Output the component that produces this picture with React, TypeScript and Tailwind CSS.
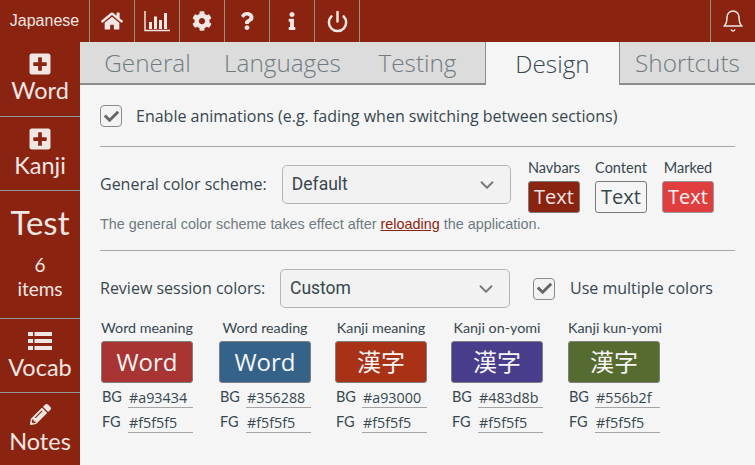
import { FaHome, FaCog, FaQuestion, FaInfo, FaPlusSquare, FaPencilAlt, FaCheck } from 'react-icons/fa'
import { LuChevronDown, LuBell, LuPower } from 'react-icons/lu'
import type { ReactNode } from 'react'

const open = "font-['Open_Sans',sans-serif]"
const round = "font-['Lato',sans-serif]"

function BarIcon() {
  return (
    <svg width="27" height="22" viewBox="0 0 27 22" fill="none">
      <path d="M1 1v19.5h25" stroke="#f0e6e3" strokeWidth="1.5" />
      <path d="M5 12h3v7H5zM10 6.5h3V19h-3zM15 10h3v9h-3zM20 3h3v16h-3z" fill="#f0e6e3" />
    </svg>
  )
}

function ListIcon() {
  return (
    <svg width="24" height="20" viewBox="0 0 24 20" fill="#f0e6e3">
      <path d="M0 1h5v4H0zM6.5 1H24v4H6.5zM0 8h5v4H0zM6.5 8H24v4H6.5zM0 15h5v4H0zM6.5 15H24v4H6.5z" />
    </svg>
  )
}

function TopCell({ children, className }: { children: ReactNode; className?: string }) {
  return <div className={`flex h-full items-center justify-center border-r border-[#9a8f8b] text-[#f0e6e3] ${className ?? 'w-[45px]'}`}>{children}</div>
}

function SideItem({ icon, label, h }: { icon: ReactNode; label: string; h: string }) {
  return (
    <div className={`flex flex-col items-center border-b border-[#8f9a98] pt-[8px] text-[#f0e6e3] ${h}`}>
      <div className="flex h-[27px] items-center text-[24px]">{icon}</div>
      <div className={`${round} -mt-[1px] text-[23.5px] leading-[28px]`}>{label}</div>
    </div>
  )
}

function Tab({ label, w, active }: { label: string; w: string; active?: boolean }) {
  if (active) {
    return (
      <div className={`flex items-center justify-center border-x border-[#8c8c8c] bg-[#f5f5f5] pt-[1px] text-[24.3px] font-light text-[#37474f] ${w}`}>
        {label}
      </div>
    )
  }
  return (
    <div className={`flex items-center justify-center border-b-2 border-[#8c8c8c] pt-[1px] text-[24.3px] font-light text-[#707b80] ${w}`}>
      {label}
    </div>
  )
}

function Checkbox() {
  return (
    <div className="flex h-[22px] w-[22px] items-center justify-center rounded-[4px] border border-[#8a8a8a] bg-[#f3f3f3] text-[15px] text-[#666]">
      <FaCheck />
    </div>
  )
}

function Select({ value, w }: { value: string; w: string }) {
  return (
    <div className={`flex h-[39px] items-center justify-between rounded-[5px] border border-[#b5b5b5] bg-[#f2f2f2] pl-[9px] pr-[12px] ${w}`}>
      <span className="font-['Roboto',sans-serif] text-[17.5px] text-[#37474f]">{value}</span>
      <LuChevronDown className="text-[22px] text-[#777]" />
    </div>
  )
}

function Swatch({ title, bg, fg, text, border }: { title: string; bg: string; fg: string; text: string; border: string }) {
  return (
    <div className="flex w-[52px] flex-col items-center">
      <div className={`${round} mb-[5px] whitespace-nowrap text-[14.5px] leading-[17px] text-[#37474f]`}>{title}</div>
      <div className={`flex h-[32px] w-[52px] items-center justify-center rounded-[3px] border ${border} ${open} text-[20px] ${bg} ${fg}`}>{text}</div>
    </div>
  )
}

const cols = [
  { title: 'Word meaning', text: 'Word', bg: 'bg-[#a93434]', hex: '#a93434', w: 'w-[118px]' },
  { title: 'Word reading', text: 'Word', bg: 'bg-[#356288]', hex: '#356288', w: 'w-[116px]' },
  { title: 'Kanji meaning', text: '漢字', bg: 'bg-[#a93116]', hex: '#a93000', w: 'w-[116px]' },
  { title: 'Kanji on-yomi', text: '漢字', bg: 'bg-[#483d8b]', hex: '#483d8b', w: 'w-[117px]' },
  { title: 'Kanji kun-yomi', text: '漢字', bg: 'bg-[#556b2f]', hex: '#556b2f', w: 'w-[100px]' },
]

function ColorRow({ name, hex }: { name: string; hex: string }) {
  return (
    <div className="flex h-[25px] items-center">
      <span className={`${round} -mt-[2px] w-[27px] pl-[1px] text-[14.5px] text-[#37474f]`}>{name}</span>
      <span className={`${open} h-[20px] w-[65px] border-b border-[#a5a5a5] pl-[1px] text-[14.3px] leading-[19px] text-[#37474f]`}>{hex}</span>
    </div>
  )
}

export default function App() {
  return (
    <div className={`flex h-[465px] w-[755px] flex-col overflow-hidden bg-[#f5f5f5] ${open}`}>
      <div className="flex h-[42px] shrink-0 bg-[#8a2310]">
        <TopCell className="w-[90px] font-['Liberation_Sans',sans-serif] text-[16px]">Japanese</TopCell>
        <TopCell><FaHome className="text-[22px]" /></TopCell>
        <TopCell><BarIcon /></TopCell>
        <TopCell><FaCog className="text-[20px]" /></TopCell>
        <TopCell><FaQuestion className="text-[18px]" /></TopCell>
        <TopCell><FaInfo className="text-[18px]" /></TopCell>
        <TopCell><LuPower className="text-[23px]" strokeWidth={2.6} /></TopCell>
        <div className="flex-1" />
        <div className="flex h-full w-[45px] items-center justify-center border-l border-[#9a8f8b] text-[24px] text-[#f0e6e3]"><LuBell strokeWidth={1.5} /></div>
      </div>
      <div className="flex flex-1">
        <div className="flex w-[80px] shrink-0 flex-col bg-[#8a2310]">
          <SideItem h="h-[75px]" icon={<FaPlusSquare />} label="Word" />
          <SideItem h="h-[74px]" icon={<FaPlusSquare />} label="Kanji" />
          <div className="flex h-[128px] flex-col items-center border-b border-[#8f9a98] pt-[10px] text-[#f0e6e3]">
            <div className={`${round} text-[33px] leading-[42px]`}>Test</div>
            <div className={`${round} mt-[9px] text-[19px] leading-[25px]`}>6</div>
            <div className={`${round} -mt-[1px] text-[19px] leading-[25px]`}>items</div>
          </div>
          <SideItem h="h-[74px]" icon={<ListIcon />} label="Vocab" />
          <SideItem h="h-[73px] border-b-0" icon={<FaPencilAlt className="text-[21px]" />} label="Notes" />
        </div>
        <div className="flex min-w-0 flex-1 flex-col">
          <div className="flex h-[43px] shrink-0 bg-[#dcdcdc]">
            <Tab label="General" w="w-[135px]" />
            <Tab label="Languages" w="w-[135px]" />
            <Tab label="Testing" w="w-[135px]" />
            <Tab label="Design" w="w-[135px]" active />
            <Tab label="Shortcuts" w="w-[135px]" />
          </div>
          <div className="pl-[20px] pr-[20px] pt-[20px]">
            <div className="flex items-center gap-[14px] pb-[19px]">
              <Checkbox />
              <span className="text-[16px] leading-[22px] text-[#37474f]">Enable animations (e.g. fading when switching between sections)</span>
            </div>
            <div className="border-t border-[#a8a8a8]" />
            <div className="mt-[12px] flex">
              <div className="flex flex-1 items-start gap-[15px] pt-[6px]">
                <span className="text-[16px] leading-[39px] text-[#37474f]">General color scheme:</span>
                <Select value="Default" w="w-[229px]" />
              </div>
              <div className="flex gap-[15px] pr-[21px]">
                <Swatch title="Navbars" text="Text" bg="bg-[#8a2310]" fg="text-[#f0e6e3]" border="border-[#7a7a7a]" />
                <Swatch title="Content" text="Text" bg="bg-[#f5f5f5]" fg="text-[#37474f]" border="border-[#7a7a7a]" />
                <Swatch title="Marked" text="Text" bg="bg-[#e03e3e]" fg="text-[#f5f5f5]" border="border-[#999]" />
              </div>
            </div>
            <div className="mt-[2px] font-['Liberation_Sans',sans-serif] text-[14.4px] leading-[18px] text-[#6f7a80]">
              The general color scheme takes effect after <span className="text-[#8a2310] underline">reloading</span> the application.
            </div>
            <div className="mt-[17px] border-t border-[#a8a8a8]" />
            <div className="mt-[18px] flex items-center">
              <span className="w-[180px] pb-[1px] text-[16px] text-[#37474f]">Review session colors:</span>
              <Select value="Custom" w="w-[230px]" />
              <div className="ml-[23px]"><Checkbox /></div>
              <span className="ml-[15px] pb-[1px] text-[16px] text-[#37474f]">Use multiple colors</span>
            </div>
            <div className="mt-[11px] flex pl-[1px]">
              {cols.map((c) => (
                <div key={c.title} className={`flex flex-col ${c.w}`}>
                  <div className={`${round} w-[92px] whitespace-nowrap text-center text-[14.3px] leading-[18px] text-[#37474f]`}>{c.title}</div>
                  <div className={`mt-[4px] flex h-[42px] w-[92px] items-center justify-center rounded-[3px] border border-[#7f7f7f] font-['Open_Sans','Noto_Sans_CJK_JP',sans-serif] text-[24px] text-[#f5f5f5] ${c.bg}`}>
                    {c.text}
                  </div>
                  <div className="mt-[2px]">
                    <ColorRow name="BG" hex={c.hex} />
                    <ColorRow name="FG" hex="#f5f5f5" />
                  </div>
                </div>
              ))}
            </div>
          </div>
        </div>
      </div>
    </div>
  )
}
